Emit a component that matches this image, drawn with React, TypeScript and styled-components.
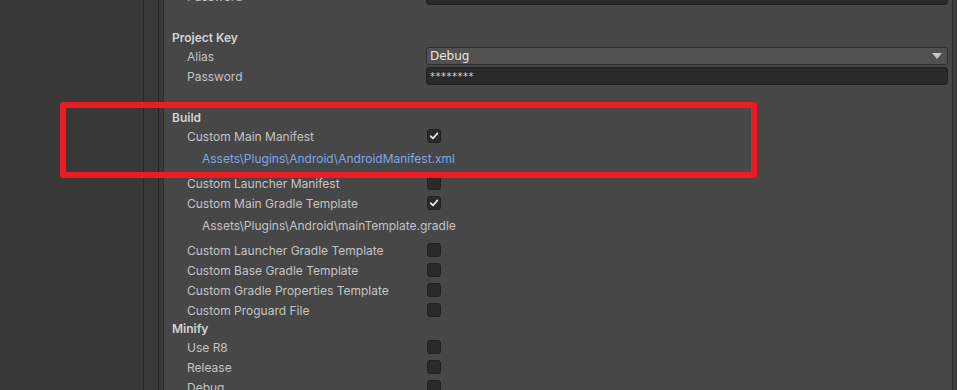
import React from "react";
import styled, { createGlobalStyle } from "styled-components";

const GlobalStyle = createGlobalStyle`
  * { box-sizing: border-box; }
  html, body { margin: 0; padding: 0; background: #383838; overflow: hidden; }
  body { font-family: Inter, "Noto Sans", "Liberation Sans", sans-serif; }
`;

const Window = styled.div`
  position: relative;
  display: flex;
  width: 957px;
  height: 390px;
  overflow: hidden;
`;

const Sidebar = styled.div`
  width: 144px;
  background: #383838;
  border-right: 1px solid #262626;
`;

const Splitter = styled.div`
  width: 20px;
  display: flex;
  background: #393939;
  border-right: 1px solid #2e2e2e;

  &::before {
    content: "";
    width: 14px;
    border-right: 1px solid #242424;
  }
`;

const Inspector = styled.div`
  flex: 1;
  background: #474747;
  border-right: 1px solid #2b2b2b;
  overflow: hidden;
`;

const Gutter = styled.div`
  width: 4px;
  background: #3d3d3d;
`;

const Content = styled.div`
  display: flex;
  flex-direction: column;
  margin-top: -14px;
  padding-left: 8px;
  padding-right: 4px;
`;

const Header = styled.div<{ $spaced?: boolean }>`
  height: 17px;
  margin-top: ${(p) => (p.$spaced ? "23px" : "0")};
  display: flex;
  align-items: center;
  font-size: 12px;
  font-weight: 600;
  color: #d4d4d4;
`;

const Row = styled.div`
  height: 20px;
  display: grid;
  grid-template-columns: 254px 1fr;
  align-items: center;
`;

const Label = styled.span`
  padding-left: 15px;
  font-size: 12px;
  color: #c4c4c4;
  white-space: nowrap;
`;

const PathRow = styled.div<{ $link?: boolean }>`
  height: 27px;
  display: flex;
  align-items: center;
  padding-left: 30px;
  padding-bottom: 3px;
  font-size: 12px;
  color: ${(p) => (p.$link ? "#7ba8ea" : "#c4c4c4")};
`;

const Field = styled.div<{ $popup?: boolean }>`
  height: 18px;
  display: flex;
  align-items: center;
  justify-content: space-between;
  padding: 0 5px 0 3px;
  border-radius: 3px;
  border: 1px solid ${(p) => (p.$popup ? "#303030" : "#212121")};
  background: ${(p) => (p.$popup ? "#515151" : "#2a2a2a")};
  color: ${(p) => (p.$popup ? "#e4e4e4" : "#d2d2d2")};
  font-family: "DejaVu Sans", "Liberation Sans", sans-serif;
  font-size: ${(p) => (p.$popup ? "12px" : "10px")};
  letter-spacing: ${(p) => (p.$popup ? "0" : "0.5px")};
`;

const Arrow = styled.span`
  width: 0;
  height: 0;
  border-left: 5px solid transparent;
  border-right: 5px solid transparent;
  border-top: 6px solid #c8c8c8;
`;

const Box = styled.span`
  width: 14px;
  height: 14px;
  display: flex;
  align-items: center;
  justify-content: center;
  margin-left: 1px;
  border-radius: 3px;
  border: 1px solid #202020;
  background: #2a2a2a;
`;

const Highlight = styled.div`
  position: absolute;
  left: 60px;
  top: 102px;
  width: 697px;
  height: 76px;
  border: 6px solid #ed1c24;
  border-radius: 3px;
  pointer-events: none;
`;

function Check({ on }: { on?: boolean }) {
  return (
    <Box>
      {on && (
        <svg width="10" height="10" viewBox="0 0 10 10">
          <path d="M1.6 5.2 L4 7.4 L8.4 2.4" fill="none" stroke="#f0f0f0" strokeWidth="1.6" strokeLinecap="round" strokeLinejoin="round" />
        </svg>
      )}
    </Box>
  );
}

function ToggleRow({ label, on }: { label: string; on?: boolean }) {
  return (
    <Row>
      <Label>{label}</Label>
      <Check on={on} />
    </Row>
  );
}

export default function App() {
  return (
    <>
      <GlobalStyle />
      <Window>
        <Sidebar />
        <Splitter />
        <Inspector>
          <Content>
            <Row>
              <Label>Password</Label>
              <Field />
            </Row>

            <Header $spaced>Project Key</Header>
            <Row>
              <Label>Alias</Label>
              <Field $popup>
                <span>Debug</span>
                <Arrow />
              </Field>
            </Row>
            <Row>
              <Label>Password</Label>
              <Field>********</Field>
            </Row>

            <Header $spaced>Build</Header>
            <ToggleRow label="Custom Main Manifest" on />
            <PathRow $link>Assets\Plugins\Android\AndroidManifest.xml</PathRow>
            <ToggleRow label="Custom Launcher Manifest" />
            <ToggleRow label="Custom Main Gradle Template" on />
            <PathRow>Assets\Plugins\Android\mainTemplate.gradle</PathRow>
            <ToggleRow label="Custom Launcher Gradle Template" />
            <ToggleRow label="Custom Base Gradle Template" />
            <ToggleRow label="Custom Gradle Properties Template" />
            <ToggleRow label="Custom Proguard File" />

            <Header>Minify</Header>
            <ToggleRow label="Use R8" />
            <ToggleRow label="Release" />
            <ToggleRow label="Debug" />
          </Content>
        </Inspector>
        <Gutter />
        <Highlight />
      </Window>
    </>
  );
}
